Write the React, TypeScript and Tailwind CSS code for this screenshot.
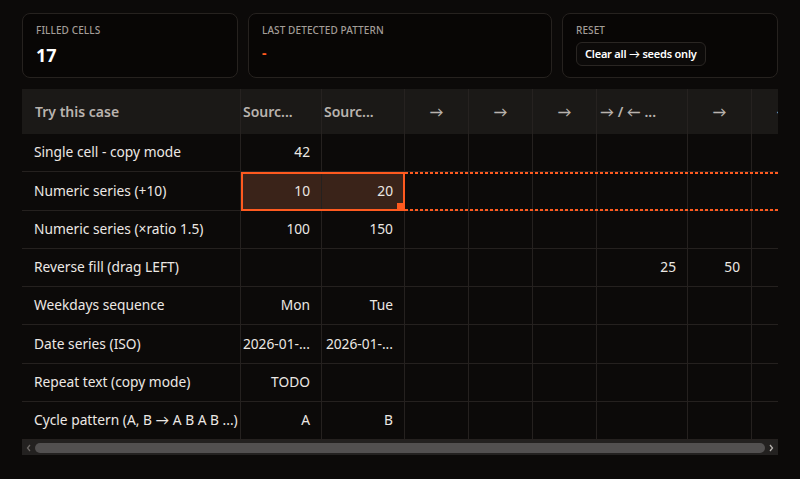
import React from "react";

const cols = [219, 81, 83, 64, 64, 64, 91, 64, 64];

const header = ["Try this case", "Sourc...", "Sourc...", "→", "→", "→", "→ / ← ...", "→", "→"];

const rows: string[][] = [
  ["Single cell - copy mode", "42"],
  ["Numeric series (+10)", "10", "20"],
  ["Numeric series (×ratio 1.5)", "100", "150"],
  ["Reverse fill (drag LEFT)", "", "", "", "", "", "25", "50"],
  ["Weekdays sequence", "Mon", "Tue"],
  ["Date series (ISO)", "2026-01-...", "2026-01-..."],
  ["Repeat text (copy mode)", "TODO"],
  ["Cycle pattern (A, B → A B A B ...)", "A", "B"],
];

function StatCard({ label, children }: { label: string; children: React.ReactNode }) {
  return (
    <div className="h-[65px] rounded-lg border border-[#26221f] bg-[#080605] px-[13px] pt-[9px]">
      <div className="text-[10px] font-medium uppercase tracking-[0.01em] text-[#a39d98] leading-[14px]">
        {label}
      </div>
      {children}
    </div>
  );
}

export default function App() {
  return (
    <div
      className="min-h-[479px] bg-[#0c0a09] px-[22px] pt-[13px] text-[#f5f2ef]"
      style={{ fontFamily: "'Noto Sans', Lato, sans-serif" }}
    >
      {/* stats */}
      <div className="grid grid-cols-[216px_1fr_216px] gap-[10px]">
        <StatCard label="Filled cells">
          <div className="mt-[7px] text-[18px] font-bold leading-[22px] text-white">17</div>
        </StatCard>
        <StatCard label="Last detected pattern">
          <div className="mt-[6px] text-[14px] font-bold leading-[20px] text-[#ff5a1f]">-</div>
        </StatCard>
        <StatCard label="Reset">
          <button className="mt-[5px] h-[24px] rounded-md border border-[#2a2623] bg-[#0c0a09] px-[8px] text-[11px] font-semibold tracking-[-0.02em] text-white">
            Clear all → seeds only
          </button>
        </StatCard>
      </div>

      {/* table */}
      <div className="mt-[11px] w-[756px] overflow-hidden">
        <div className="relative w-max">
          <div className="flex h-[45px] bg-[#1b1917]">
            {header.map((h, i) => (
              <div
                key={i}
                style={{ width: cols[i] }}
                className={
                  "flex shrink-0 items-center border-r border-[#262220] text-[14px] font-semibold text-[#b9b3ae] whitespace-nowrap " +
                  (i === 0 ? "pl-[13px]" : i === 1 || i === 2 ? "pl-[2px]" : i === 6 ? "pl-[3px]" : "justify-center")
                }
              >
                {h}
              </div>
            ))}
          </div>

          {rows.map((r, ri) => (
            <div key={ri} className="flex h-[38.25px] border-b border-[#25211f]">
              {cols.map((w, ci) => {
                const sel = ri === 1 && (ci === 1 || ci === 2);
                return (
                  <div
                    key={ci}
                    style={{ width: w }}
                    className={
                      "flex shrink-0 items-center border-r border-[#25211f] text-[13.75px] whitespace-nowrap text-[#ece8e4] " +
                      (ci === 0 ? "pl-[12px]" : "justify-end pr-[11px]") +
                      (sel ? " bg-[#3a2319]" : "")
                    }
                  >
                    {r[ci] ?? ""}
                  </div>
                );
              })}
            </div>
          ))}

          {/* selected range */}
          <div className="pointer-events-none absolute left-[219px] top-[83px] h-[39px] w-[164px] border-2 border-[#ff5a1f]">
            <div className="absolute -bottom-[2px] -right-[2px] h-[8px] w-[8px] bg-[#ff5a1f]" />
          </div>
          {/* fill preview */}
          <div className="pointer-events-none absolute left-[383px] right-0 top-[83px] h-[2px] bg-[repeating-linear-gradient(90deg,#ff5a1f_0_3px,transparent_3px_5px)]" />
          <div className="pointer-events-none absolute left-[383px] right-0 top-[120px] h-[2px] bg-[repeating-linear-gradient(90deg,#ff5a1f_0_3px,transparent_3px_5px)]" />
        </div>

        {/* scrollbar */}
        <div className="flex h-[15px] items-center bg-[#232120] px-[2px]">
          <svg width="10" height="10" viewBox="0 0 10 10" className="shrink-0">
            <path d="M6 2 L3.5 5 L6 8" stroke="#6b6764" strokeWidth="1.3" fill="none" />
          </svg>
          <div className="mx-[1px] h-[10px] flex-1 rounded-full bg-[#525050]" />
          <svg width="10" height="10" viewBox="0 0 10 10" className="shrink-0">
            <path d="M4 2 L6.5 5 L4 8" stroke="#b5b1ad" strokeWidth="1.3" fill="none" />
          </svg>
        </div>
      </div>
    </div>
  );
}
